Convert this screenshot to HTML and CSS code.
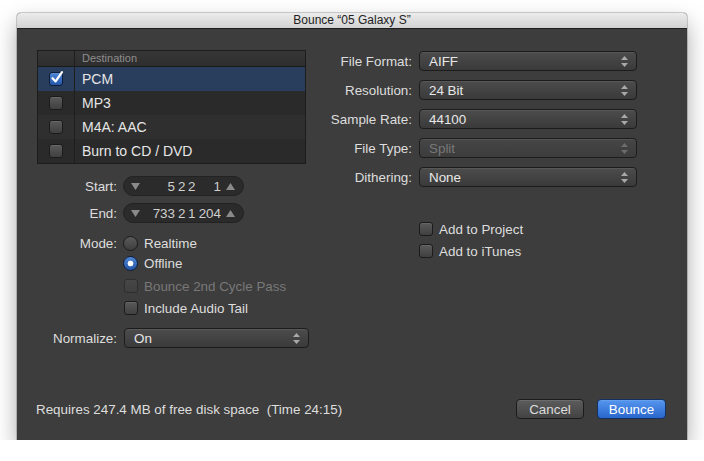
FILE: index.html
```html
<!DOCTYPE html>
<html lang="en">
<head>
    <meta charset="UTF-8">
    <meta name="viewport" content="width=device-width, initial-scale=1.0">
    <title>Bounce</title>
    <link rel="stylesheet" href="styles.css">
</head>
<body>

    <div class="window">
        <div class="titlebar">Bounce “05 Galaxy S”</div>

        <div class="content">
            <div class="main">

                <!-- Left side: destinations, range, mode -->
                <div class="left">
                    <div class="dest-table">
                        <div class="dest-head">
                            <span class="col-check"></span>
                            <span class="col-name">Destination</span>
                        </div>
                        <div class="dest-row selected">
                            <span class="col-check">
                                <span class="checkbox checked">
                                    <svg width="16" height="16" viewBox="0 0 16 16"><path d="M3.5 8.2 L6.6 11.4 L13 2.2" fill="none" stroke="#fff" stroke-width="2.2" stroke-linecap="round" stroke-linejoin="round"/></svg>
                                </span>
                            </span>
                            <span class="col-name">PCM</span>
                        </div>
                        <div class="dest-row">
                            <span class="col-check"><span class="checkbox"></span></span>
                            <span class="col-name">MP3</span>
                        </div>
                        <div class="dest-row odd">
                            <span class="col-check"><span class="checkbox"></span></span>
                            <span class="col-name">M4A: AAC</span>
                        </div>
                        <div class="dest-row">
                            <span class="col-check"><span class="checkbox"></span></span>
                            <span class="col-name">Burn to CD / DVD</span>
                        </div>
                    </div>

                    <div class="form-row first">
                        <span class="form-label">Start:</span>
                        <div class="stepper">
                            <svg class="tri" width="9" height="7" viewBox="0 0 9 7"><path d="M0 0 L9 0 L4.5 7 Z" fill="#8a8a8a"/></svg>
                            <span class="pos">
                                <span class="seg wide">5</span>
                                <span class="seg">2</span>
                                <span class="seg">2</span>
                                <span class="seg wide">1</span>
                            </span>
                            <svg class="tri" width="9" height="7" viewBox="0 0 9 7"><path d="M0 7 L9 7 L4.5 0 Z" fill="#8a8a8a"/></svg>
                        </div>
                    </div>
                    <div class="form-row">
                        <span class="form-label">End:</span>
                        <div class="stepper">
                            <svg class="tri" width="9" height="7" viewBox="0 0 9 7"><path d="M0 0 L9 0 L4.5 7 Z" fill="#8a8a8a"/></svg>
                            <span class="pos">
                                <span class="seg wide">733</span>
                                <span class="seg">2</span>
                                <span class="seg">1</span>
                                <span class="seg wide">204</span>
                            </span>
                            <svg class="tri" width="9" height="7" viewBox="0 0 9 7"><path d="M0 7 L9 7 L4.5 0 Z" fill="#8a8a8a"/></svg>
                        </div>
                    </div>

                    <div class="mode">
                        <div class="form-row">
                            <span class="form-label">Mode:</span>
                            <span class="radio"></span>
                            <span class="opt">Realtime</span>
                        </div>
                        <div class="form-row">
                            <span class="form-label"></span>
                            <span class="radio on"></span>
                            <span class="opt">Offline</span>
                        </div>
                        <div class="form-row check-row">
                            <span class="form-label"></span>
                            <span class="checkbox disabled"></span>
                            <span class="opt disabled">Bounce 2nd Cycle Pass</span>
                        </div>
                        <div class="form-row check-row tail">
                            <span class="form-label"></span>
                            <span class="checkbox"></span>
                            <span class="opt">Include Audio Tail</span>
                        </div>
                    </div>

                    <div class="form-row normalize">
                        <span class="form-label">Normalize:</span>
                        <div class="popup wide">
                            <span>On</span>
                            <svg class="arrows" width="7" height="11" viewBox="0 0 7 11"><path d="M0 4 L7 4 L3.5 0 Z M0 7 L7 7 L3.5 11 Z" fill="#a8a8a8"/></svg>
                        </div>
                    </div>
                </div>

                <!-- Right side: file settings -->
                <div class="right">
                    <div class="set-row">
                        <span class="set-label">File Format:</span>
                        <div class="popup"><span>AIFF</span><svg class="arrows" width="7" height="11" viewBox="0 0 7 11"><path d="M0 4 L7 4 L3.5 0 Z M0 7 L7 7 L3.5 11 Z" fill="#a8a8a8"/></svg></div>
                    </div>
                    <div class="set-row">
                        <span class="set-label">Resolution:</span>
                        <div class="popup"><span>24 Bit</span><svg class="arrows" width="7" height="11" viewBox="0 0 7 11"><path d="M0 4 L7 4 L3.5 0 Z M0 7 L7 7 L3.5 11 Z" fill="#a8a8a8"/></svg></div>
                    </div>
                    <div class="set-row">
                        <span class="set-label">Sample Rate:</span>
                        <div class="popup"><span>44100</span><svg class="arrows" width="7" height="11" viewBox="0 0 7 11"><path d="M0 4 L7 4 L3.5 0 Z M0 7 L7 7 L3.5 11 Z" fill="#a8a8a8"/></svg></div>
                    </div>
                    <div class="set-row">
                        <span class="set-label">File Type:</span>
                        <div class="popup disabled"><span>Split</span><svg class="arrows" width="7" height="11" viewBox="0 0 7 11"><path d="M0 4 L7 4 L3.5 0 Z M0 7 L7 7 L3.5 11 Z" fill="#6c6c6c"/></svg></div>
                    </div>
                    <div class="set-row">
                        <span class="set-label">Dithering:</span>
                        <div class="popup"><span>None</span><svg class="arrows" width="7" height="11" viewBox="0 0 7 11"><path d="M0 4 L7 4 L3.5 0 Z M0 7 L7 7 L3.5 11 Z" fill="#a8a8a8"/></svg></div>
                    </div>

                    <div class="add-group">
                        <div class="add-row"><span class="checkbox"></span><span class="opt">Add to Project</span></div>
                        <div class="add-row"><span class="checkbox"></span><span class="opt">Add to iTunes</span></div>
                    </div>
                </div>
            </div>

            <div class="footer">
                <span class="disk">Requires 247.4 MB of free disk space&nbsp; (Time 24:15)</span>
                <button class="btn">Cancel</button>
                <button class="btn primary">Bounce</button>
            </div>
        </div>
    </div>

</body>
</html>
```

FILE: styles.css
```css
/* Page and window frame */
body {
    margin: 0;
    background-color: #fff;
    font-family: "Liberation Sans", Arial, sans-serif;
    font-size: 13.4px;
    color: #dedede;
}
.window {
    width: 670px;
    height: 427px;
    margin: 13px 0 0 17px;
    display: flex;
    flex-direction: column;
    background-color: #3d3d3d;
    border-radius: 4px 4px 0 0;
    box-shadow: 0 10px 22px rgba(0, 0, 0, 0.35), 0 0 0 1px rgba(0, 0, 0, 0.18);
    overflow: hidden;
}
.titlebar {
    height: 15px;
    line-height: 15px;
    text-align: center;
    font-size: 12px;
    color: #222;
    background: linear-gradient(#ececec, #d2d2d2);
    border-bottom: 1px solid #1e1e1e;
}
.content {
    flex: 1;
    display: flex;
    flex-direction: column;
    padding: 21px 21px 21px 20px;
}
.main {
    display: flex;
    gap: 14px;
}

/* Destination table */
.left {
    width: 269px;
    flex-shrink: 0;
}
.dest-table {
    border: 1px solid #1c1c1c;
    background-color: #2a2a2a;
}
.dest-head {
    display: flex;
    height: 15px;
    line-height: 14px;
    font-size: 11px;
    color: #8e8e8e;
    background: linear-gradient(#363636, #2e2e2e);
    border-bottom: 1px solid #1a1a1a;
}
.dest-row {
    display: flex;
    height: 24px;
    line-height: 24px;
    font-size: 14px;
    color: #e6e6e6;
    background-color: #2a2a2a;
}
.dest-row.odd {
    background-color: #2f2f2f;
}
.dest-row.selected {
    background-color: #293d5c;
}
.col-check {
    width: 36px;
    flex-shrink: 0;
    border-right: 1px solid #1e1e1e;
    display: flex;
    align-items: center;
    justify-content: center;
}
.col-name {
    padding-left: 7px;
}

/* Checkboxes and radios */
.checkbox {
    position: relative;
    width: 12px;
    height: 12px;
    flex-shrink: 0;
    border: 1px solid #1b1b1b;
    border-radius: 3px;
    background: linear-gradient(#5a5a5a, #404040);
    box-shadow: inset 0 1px 0 rgba(255, 255, 255, 0.08);
}
.checkbox.checked {
    border-color: #0e1d3a;
    background: linear-gradient(#4f86d6, #2556a8);
}
.checkbox.checked svg {
    position: absolute;
    left: -1px;
    top: -3px;
}
.checkbox.disabled {
    border-color: #2e2e2e;
    background: linear-gradient(#474747, #3f3f3f);
    box-shadow: none;
}
.radio {
    width: 13px;
    height: 13px;
    flex-shrink: 0;
    border: 1px solid #1b1b1b;
    border-radius: 50%;
    background: linear-gradient(#5a5a5a, #3e3e3e);
}
.radio.on {
    border-color: #0e1d3a;
    background: radial-gradient(circle, #fff 0 2.6px, transparent 3.2px), linear-gradient(#4f86d6, #2556a8);
}
.opt {
    margin-left: 6px;
}
.opt.disabled {
    color: #787878;
}

/* Left form rows */
.form-row {
    display: flex;
    align-items: center;
    height: 20px;
    margin-top: 7px;
}
.form-row.first {
    margin-top: 12px;
}
.form-label {
    width: 80px;
    margin-right: 6px;
    flex-shrink: 0;
    text-align: right;
}
.mode {
    margin-top: 10px;
}
.mode .form-row {
    margin-top: 0;
}
.mode .check-row {
    margin-top: 3px;
}
.mode .check-row.tail {
    margin-top: 2px;
}
.mode .check-row .checkbox {
    margin-left: 1px;
}
.form-row.normalize {
    margin-top: 10px;
}

/* Position stepper */
.stepper {
    width: 104px;
    height: 18px;
    flex-shrink: 0;
    display: flex;
    align-items: center;
    padding: 0 8px 0 7px;
    border: 1px solid #222;
    border-radius: 10px;
    background-color: #2b2b2b;
    color: #cfcfcf;
}
.stepper .tri {
    flex-shrink: 0;
}
.pos {
    display: flex;
    gap: 3px;
    margin-left: auto;
    margin-right: 5px;
}
.seg {
    width: 7px;
    text-align: right;
}
.seg.wide {
    width: 23px;
}

/* Popup buttons */
.popup {
    width: 218px;
    height: 20px;
    flex-shrink: 0;
    display: flex;
    align-items: center;
    justify-content: space-between;
    padding: 0 8px 0 9px;
    box-sizing: border-box;
    border: 1px solid #1c1c1c;
    border-radius: 4px;
    background: linear-gradient(#4c4c4c, #3a3a3a);
    box-shadow: inset 0 1px 0 rgba(255, 255, 255, 0.07);
    color: #e8e8e8;
}
.popup.wide {
    width: 185px;
    margin-left: 1px;
}
.popup.disabled {
    color: #787878;
    background: linear-gradient(#464646, #3c3c3c);
}

/* Right settings */
.right {
    padding-top: 1px;
}
.set-row {
    display: flex;
    align-items: center;
    margin-bottom: 9px;
}
.set-label {
    width: 92px;
    margin-right: 7px;
    text-align: right;
}
.add-group {
    margin-top: 32px;
    padding-left: 99px;
}
.add-row {
    display: flex;
    align-items: center;
    height: 20px;
    margin-bottom: 2px;
}

/* Footer */
.footer {
    margin-top: auto;
    display: flex;
    align-items: center;
    gap: 13px;
}
.disk {
    margin-left: -1px;
    margin-right: auto;
}
.btn {
    height: 20px;
    width: 68px;
    padding: 0;
    font-family: "Liberation Sans", Arial, sans-serif;
    font-size: 13.4px;
    color: #dcdcdc;
    border: 1px solid #1c1c1c;
    border-radius: 4px;
    background: linear-gradient(#5c5c5c, #434343);
    box-shadow: inset 0 1px 0 rgba(255, 255, 255, 0.1);
}
.btn.primary {
    width: 69px;
    color: #fff;
    border-color: #123061;
    background: linear-gradient(#5596ee, #2a66cc);
}
```
